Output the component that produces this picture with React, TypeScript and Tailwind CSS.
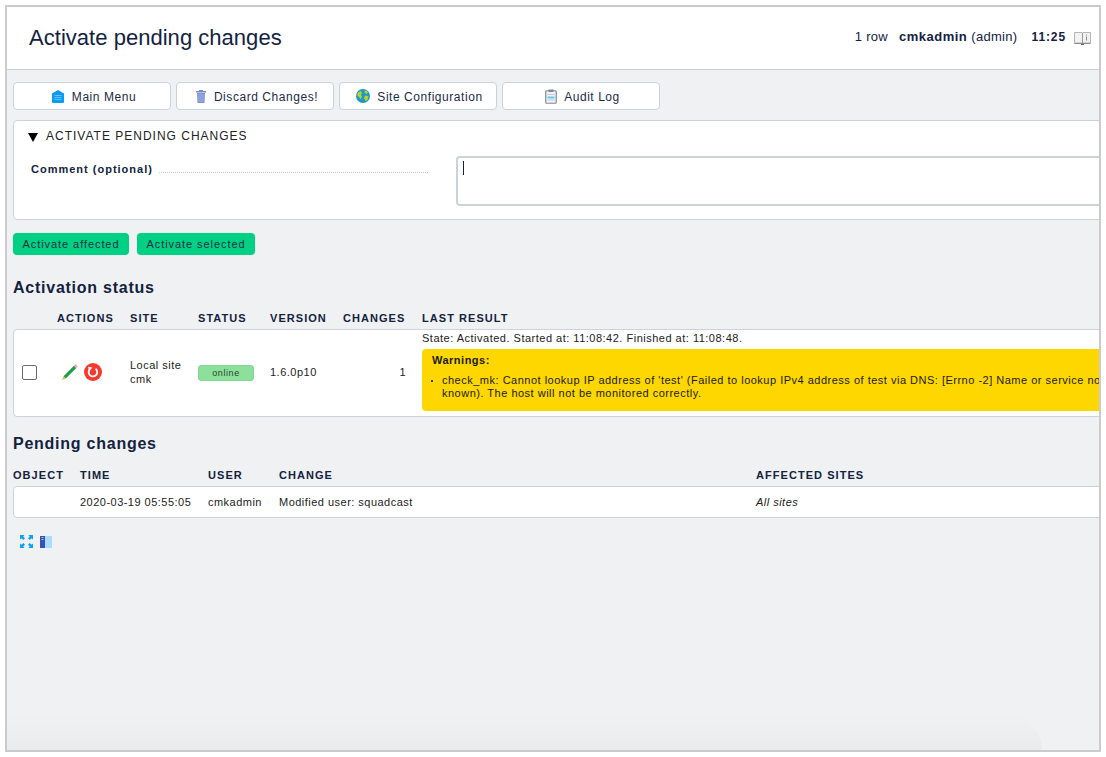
import type { ReactNode } from 'react'

const navy = 'text-[#13223f]'

function HomeIcon() {
  return (
    <svg width="14" height="13" viewBox="0 0 14 13">
      <path d="M1 3.500 7 0l6 3.500V12a1 1 0 0 1-1 1H2a1 1 0 0 1-1-1z" fill="#0a9cf5" />
      <path d="M3.500 5.500h7M3.500 7.500h7M3.500 9.500h7" stroke="#7cc8fa" strokeWidth="0.8" />
    </svg>
  )
}

function TrashIcon() {
  return (
    <svg width="12" height="13" viewBox="0 0 12 13">
      <path d="M4 0h4v1h3v1.500H1V1h3z" fill="#7288c8" />
      <path d="M2 3h8l-.5 10h-7z" fill="#7d92d6" />
      <path d="M4 4v8M6 4v8M8 4v8" stroke="#a9b8e6" strokeWidth="0.8" />
    </svg>
  )
}

function GlobeIcon() {
  return (
    <svg width="14" height="14" viewBox="0 0 14 14">
      <circle cx="7" cy="7" r="7" fill="#1b9ac4" />
      <path d="M2 3.500 5 2l1 2-1 2 1 2-1.500 2L2.500 7.500 1 6z" fill="#bccf32" />
      <path d="M8.500 1.500 11 2l1 2-2 1-1.500-1.500zM9 6.500l3.500.5-1 4-2 1L8 9z" fill="#bccf32" />
    </svg>
  )
}

function ClipboardIcon() {
  return (
    <svg width="12" height="15" viewBox="0 0 12 15">
      <rect x="0.750" y="1.750" width="10.500" height="12.500" rx="1" fill="#eef2f5" stroke="#7f8c99" strokeWidth="1.200" />
      <rect x="3.500" y="0.500" width="5" height="2.500" fill="#7f8c99" />
      <rect x="2.500" y="5" width="7" height="1" fill="#c5ccd3" />
      <rect x="2.500" y="7.500" width="7" height="2" fill="#66c7f2" />
      <rect x="2.500" y="10.500" width="7" height="1" fill="#c5ccd3" />
    </svg>
  )
}

function BookIcon() {
  return (
    <svg width="17" height="14" viewBox="0 0 17 14">
      <path d="M.500 1.500H8l.5.5.5-.5h7.500v10.500H.500z" fill="#f2f2f2" stroke="#b4b4b4" />
      <path d="M8.500 2v10" stroke="#9a9a9a" />
      <path d="M.500 12.500h16" stroke="#8c8c8c" />
      <path d="M7 13.500h3" stroke="#666" />
      <path d="M12.500 3.500v1M12.500 5.500v4" stroke="#8a8a8a" />
    </svg>
  )
}

function PencilIcon() {
  return (
    <svg width="16" height="16" viewBox="0 0 16 16">
      <path d="M1.500 12.200 12 1.700 14.300 4 3.800 14.500z" fill="#1f9e4a" />
      <path d="M12 1.700 13.500.200 15.800 2.500 14.300 4z" fill="#f2a7a7" />
      <path d="M0 16 1.500 12.200 3.800 14.500z" fill="#e0b84a" />
    </svg>
  )
}

function RestartIcon() {
  return (
    <svg width="18" height="18" viewBox="0 0 18 18">
      <circle cx="9" cy="9" r="9" fill="#f5392e" />
      <path d="M11.500 5.700a4.300 4.300 0 1 1-5.600 .4" fill="none" stroke="#fff" strokeWidth="1.800" />
      <path d="M4.200 3.700 8.500 4.500 5 8z" fill="#fff" />
    </svg>
  )
}

function ExpandIcon() {
  return (
    <svg width="13" height="13" viewBox="0 0 13 13" fill="#0aa2f5">
      <path d="M0 0h4.500L3.200 1.400 5 3.300 3.300 5 1.400 3.200 0 4.500z" />
      <path d="M13 0H8.500l1.300 1.400L8 3.300 9.700 5l1.900-1.800L13 4.500z" />
      <path d="M0 13h4.500l-1.300-1.400L5 9.700 3.300 8 1.400 9.800 0 8.500z" />
      <path d="M13 13H8.500l1.300-1.400L8 9.700 9.700 8l1.900 1.800L13 8.500z" />
    </svg>
  )
}

function SidebarIcon() {
  return (
    <svg width="12" height="12" viewBox="0 0 12 12">
      <rect width="5" height="12" fill="#3454b4" />
      <rect x="5" width="7" height="12" fill="#aaddfb" />
      <rect x="1.500" y="1" width="2" height="1" fill="#a9b8e6" />
      <rect x="1.500" y="3" width="2" height="1" fill="#a9b8e6" />
    </svg>
  )
}

function NavButton({ icon, label }: { icon: ReactNode; label: string }) {
  return (
    <div className="flex h-7 w-[158px] items-center justify-center gap-[7px] rounded-[4px] border border-[#cdd1dc] bg-white pl-[3px] text-[12px] tracking-[0.55px] text-[#1b2a47]">
      {icon}
      <span className="pt-[2px]">{label}</span>
    </div>
  )
}

function ActivateButton({ label, width }: { label: string; width: string }) {
  return (
    <div className={`flex h-[22px] items-center justify-center rounded-[4px] bg-[#00d084] text-[11px] tracking-[0.93px] text-[#13303f] ${width}`}>
      {label}
    </div>
  )
}

function Heading({ label }: { label: string }) {
  return <h2 className={`text-[16px] font-bold leading-[18px] tracking-[0.75px] ${navy}`}>{label}</h2>
}

function Th({ label, className }: { label: string; className: string }) {
  return <div className={`shrink-0 text-[11px] font-bold tracking-[1.05px] ${navy} ${className}`}>{label}</div>
}

export default function App() {
  return (
    <div className="h-[757px] w-[1106px] bg-white pl-[5px] pr-[5px] pt-[5px] pb-[5px] font-['Liberation_Sans',Arial,sans-serif]">
      <div className="relative flex h-[747px] w-[1096px] flex-col overflow-hidden border-2 border-[#cbcbcb] bg-[#f0f1f3]">
        {/* Header */}
        <div className="flex h-[63px] shrink-0 items-center justify-between border-b border-[#cdd0da] bg-white pb-[2px] pl-[22px] pr-[8px]">
          <h1 className={`text-[22px] tracking-[0.03px] ${navy}`}>Activate pending changes</h1>
          <div className={`flex items-center text-[13px] tracking-[0.3px] ${navy}`}>
            <span>1 row</span>
            <span className="ml-[11px] font-bold tracking-[0.5px]">cmkadmin</span>
            <span className="ml-[4px]">(admin)</span>
            <span className="ml-[14px] text-[12px] font-bold tracking-[0.9px]">11:25</span>
            <span className="ml-[8px] mt-[1px]"><BookIcon /></span>
          </div>
        </div>

        <div className="flex w-[1200px] flex-col pl-[6px] pt-[12px]">
          {/* Buttons */}
          <div className="flex gap-[5px]">
            <NavButton icon={<HomeIcon />} label="Main Menu" />
            <NavButton icon={<TrashIcon />} label="Discard Changes!" />
            <NavButton icon={<GlobeIcon />} label="Site Configuration" />
            <NavButton icon={<ClipboardIcon />} label="Audit Log" />
          </div>

          {/* Comment form */}
          <div className="mt-[10px] h-[100px] rounded-[4px] border border-[#cdd1dc] bg-white">
            <div className="flex items-center pl-[14px] pt-[8px] text-[12px] leading-[14px] tracking-[1px] text-[#222]">
              <svg width="10" height="9" viewBox="0 0 10 9" className="mt-[3px]"><path d="M0 0h10L5 9z" fill="#000" /></svg>
              <span className="ml-[8px]">ACTIVATE PENDING CHANGES</span>
            </div>
            <div className="mt-[8px] flex">
              <div className="flex w-[442px] items-start pl-[17px] pt-[12px]">
                <span className={`text-[11px] font-bold leading-[13px] tracking-[1px] ${navy}`}>Comment (optional)</span>
                <div className="ml-[6px] mt-[9px] w-[269px] border-b border-dotted border-[#c4c7cc]" />
              </div>
              <div className="mt-[5px] h-[50px] flex-1 rounded-[4px] border-2 border-[#cdd1dc] pl-[5px] pt-[3px]">
                <div className="h-[14px] w-px bg-[#13223f]" />
              </div>
            </div>
          </div>

          {/* Activate buttons */}
          <div className="mt-[13px] flex gap-[8px]">
            <ActivateButton label="Activate affected" width="w-[116px]" />
            <ActivateButton label="Activate selected" width="w-[118px]" />
          </div>

          {/* Activation status */}
          <div className="mt-[24px]"><Heading label="Activation status" /></div>
          <div className="mt-[15px] flex h-[13px] items-center leading-[13px]">
            <Th label="ACTIONS" className="ml-[44px] w-[73px]" />
            <Th label="SITE" className="w-[68px]" />
            <Th label="STATUS" className="w-[72px]" />
            <Th label="VERSION" className="w-[73px]" />
            <Th label="CHANGES" className="w-[79px]" />
            <Th label="LAST RESULT" className="w-[200px]" />
          </div>
          <div className="mt-[4px] flex h-[88px] rounded-[4px] border border-[#cdd1dc] bg-white pb-[2px] text-[11px] text-[#222] tracking-[0.5px]">
            <div className="flex w-[43px] shrink-0 items-center pl-[8px]">
              <div className="h-[15px] w-[15px] rounded-[2px] border border-[#6b6b6b] bg-white" />
            </div>
            <div className="flex w-[73px] shrink-0 items-center gap-[6px] pl-[5px]">
              <PencilIcon />
              <RestartIcon />
            </div>
            <div className="flex w-[68px] shrink-0 items-center leading-[14px]">Local site<br />cmk</div>
            <div className="flex w-[72px] shrink-0 items-center">
              <div className="mt-[2px] flex h-4 w-14 items-center justify-center rounded-[3px] border border-[#80d890] bg-[#8de09b] pt-[2px] text-[9px] tracking-[0.6px] text-[#24462d]">online</div>
            </div>
            <div className="flex w-[73px] shrink-0 items-center">1.6.0p10</div>
            <div className="flex w-[63px] shrink-0 items-center justify-end">1</div>
            <div className="ml-[16px] flex-1 pt-[2px]">
              <div className="h-[13px] leading-[13px]">State: Activated. Started at: 11:08:42. Finished at: 11:08:48.</div>
              <div className="mt-[4px] h-[62px] rounded-[4px] bg-[#ffd700] pl-[10px] pt-[5px] text-[11px] leading-[13px] text-[#1a1a0a]">
                <div className="font-bold">Warnings:</div>
                <div className="mt-[7px] flex">
                  <span className="-ml-[1px] mt-[6px] h-[2px] w-[2px] shrink-0 rounded-full bg-black" />
                  <div className="ml-[9px] w-[700px]">
                    <span className="whitespace-nowrap">check_mk: Cannot lookup IP address of &apos;test&apos; (Failed to lookup IPv4 address of test via DNS: [Errno -2] Name or service not</span>
                    <br />
                    known). The host will not be monitored correctly.
                  </div>
                </div>
              </div>
            </div>
          </div>

          {/* Pending changes */}
          <div className="mt-[18px]"><Heading label="Pending changes" /></div>
          <div className="mt-[16px] flex h-[13px] items-center leading-[13px]">
            <Th label="OBJECT" className="w-[67px]" />
            <Th label="TIME" className="w-[128px]" />
            <Th label="USER" className="w-[71px]" />
            <Th label="CHANGE" className="w-[477px]" />
            <Th label="AFFECTED SITES" className="w-[200px]" />
          </div>
          <div className="mt-[4px] flex h-[32px] items-center rounded-[4px] border border-[#cdd1dc] bg-white text-[11px] tracking-[0.48px] text-[#222]">
            <div className="ml-[66px] w-[128px] shrink-0">2020-03-19 05:55:05</div>
            <div className="w-[71px] shrink-0">cmkadmin</div>
            <div className="w-[477px] shrink-0">Modified user: squadcast</div>
            <div className="italic">All sites</div>
          </div>

          {/* Footer icons */}
          <div className="ml-[7px] mt-[17px] flex items-center gap-[7px]">
            <ExpandIcon />
            <SidebarIcon />
          </div>
        </div>

        {/* Soft shadow along the bottom */}
        <div className="absolute bottom-0 left-0 h-[36px] w-[1035px] rounded-tr-[36px] bg-gradient-to-b from-transparent to-[#e9ebec]" />
      </div>
    </div>
  )
}
